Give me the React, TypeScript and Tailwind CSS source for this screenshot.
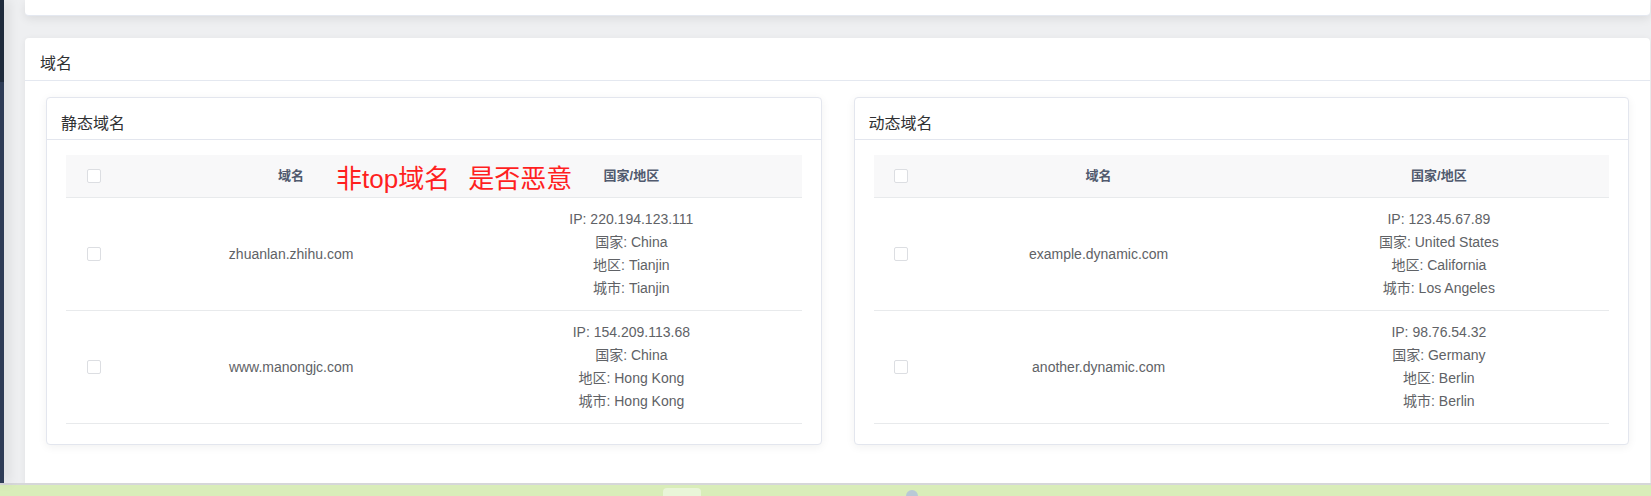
import React from "react";

interface DomainRow {
  id: number;
  domain: string;
  ip: string;
  country: string;
  region: string;
  city: string;
}

const staticDomains: DomainRow[] = [
  { id: 1, domain: "zhuanlan.zhihu.com", ip: "220.194.123.111", country: "China", region: "Tianjin", city: "Tianjin" },
  { id: 2, domain: "www.manongjc.com", ip: "154.209.113.68", country: "China", region: "Hong Kong", city: "Hong Kong" },
];

const dynamicDomains: DomainRow[] = [
  { id: 1, domain: "example.dynamic.com", ip: "123.45.67.89", country: "United States", region: "California", city: "Los Angeles" },
  { id: 2, domain: "another.dynamic.com", ip: "98.76.54.32", country: "Germany", region: "Berlin", city: "Berlin" },
];

const Checkbox = () => (
  <span className="inline-block w-[14px] h-[14px] rounded-[2px] border border-[#dcdee2] bg-white" />
);

const DomainTable = ({ rows, annotate }: { rows: DomainRow[]; annotate?: boolean }) => {
  return (
    <div className="w-full">
      <div className="relative grid grid-cols-[55px_1fr_1fr] h-[43px] bg-[#f8f8f9] border-b border-[#e8eaec] text-[13px] font-bold text-[#515a6e]">
        <div className="flex items-center justify-center">
          <Checkbox />
        </div>
        <div className="flex items-center justify-center">域名</div>
        <div className="flex items-center justify-center">国家/地区</div>
        {annotate && (
          <div className="absolute left-[270px] top-[10px] text-[26px] leading-[28px] font-normal text-[#ff1f1f] whitespace-nowrap">
            <span>非top域名</span>
            <span className="ml-[18px]">是否恶意</span>
          </div>
        )}
      </div>
      {rows.map((row) => (
        <div
          key={row.id}
          className="grid grid-cols-[55px_1fr_1fr] py-[10px] border-b border-[#e8eaec] text-[14px] text-[#606266]"
        >
          <div className="flex items-center justify-center">
            <Checkbox />
          </div>
          <div className="flex items-center justify-center">{row.domain}</div>
          <div className="flex flex-col items-center justify-center leading-[23px]">
            <div>IP: {row.ip}</div>
            <div>国家: {row.country}</div>
            <div>地区: {row.region}</div>
            <div>城市: {row.city}</div>
          </div>
        </div>
      ))}
    </div>
  );
};

const InnerCard = ({ title, children }: { title: string; children: React.ReactNode }) => (
  <div className="bg-white border border-[#e3e6ee] rounded-[4px] shadow-[0_2px_10px_rgba(0,0,0,0.06)]">
    <div className="h-[42px] flex items-center pt-[10px] px-[14px] border-b border-[#e3e6ee] text-[16px] text-[#303133]">
      {title}
    </div>
    <div className="px-[19px] pt-[15px] pb-[20px]">{children}</div>
  </div>
);

const App = () => {
  return (
    <main
      className="w-[1651px] h-[496px] flex flex-col overflow-hidden bg-[#f0f1f3]"
      style={{ fontFamily: '"Liberation Sans", "Noto Sans CJK SC", sans-serif' }}
    >
      <div className="flex flex-1 min-h-0">
        {/* sidebar edge */}
        <div className="relative z-10 w-[4px] flex flex-col shadow-[3px_0_12px_rgba(0,0,0,0.18)]">
          <div className="h-[82px] bg-[#1f2b3c]" />
          <div className="flex-1 bg-[#2e3c56]" />
        </div>

        <div className="flex-1 flex flex-col pl-[21px] pr-[1px] bg-[#eeeff1]">
          <div className="h-[16px] bg-white rounded-b-[4px] border-b border-[#e4e8f0] shadow-[0_3px_10px_rgba(0,0,0,0.08)]" />

          <div className="mt-[22px] flex-1 bg-white rounded-t-[4px] shadow-[0_1px_6px_rgba(0,0,0,0.06)]">
            <div className="h-[43px] flex items-center pt-[10px] px-[15px] border-b border-[#e4e8f0] text-[16px] text-[#303133]">
              域名
            </div>
            <div className="grid grid-cols-2 gap-[32px] px-[21px] pt-[16px]">
              <InnerCard title="静态域名">
                <DomainTable rows={staticDomains} annotate />
              </InnerCard>
              <InnerCard title="动态域名">
                <DomainTable rows={dynamicDomains} />
              </InnerCard>
            </div>
          </div>
        </div>
      </div>

      {/* bottom strip */}
      <div className="h-[2px] bg-[#d6d7d9]" />
      <div className="relative h-[11px] bg-[#d9edb9]">
        <div className="absolute left-[663px] top-[3px] w-[38px] h-[10px] rounded-t-[4px] bg-[#e9f5d8]" />
        <div className="absolute left-[906px] top-[5px] w-[12px] h-[12px] rounded-full bg-[#b9c9d6]" />
      </div>
    </main>
  );
};

export default App;
